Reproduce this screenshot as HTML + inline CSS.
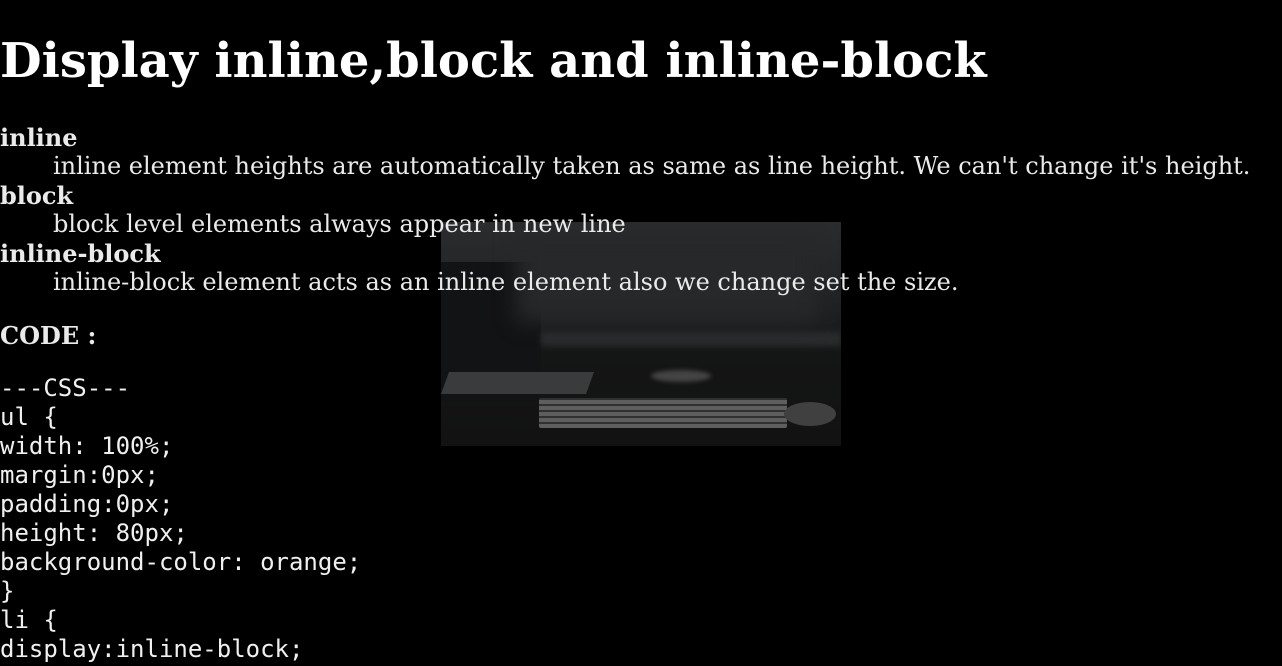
<!DOCTYPE html>
<html><head><meta charset="utf-8"><style>
html,body{margin:0;background:#000;width:1282px;height:666px;overflow:hidden}
body{position:relative;color:#eaeaea;font-family:"DejaVu Serif","Liberation Serif",serif}
.l{position:absolute;left:0;white-space:pre;line-height:29px;font-size:24px}
.b{font-weight:bold}
.d{left:53px}
.m{font-family:"DejaVu Sans Mono","Liberation Mono",monospace;font-size:24px;color:#f0f0f0}
h1{position:absolute;left:0;top:31px;margin:0;font-size:48px;line-height:60px;color:#fff;white-space:nowrap}
.img{position:absolute;left:441px;top:222px;width:400px;height:224px;overflow:hidden;
background:linear-gradient(180deg,#2a2c2e 0%,#202224 35%,#1a1b1c 50%,#141515 60%,#121212 100%)}
</style></head><body>
<div class="img">
<div style="position:absolute;left:0;top:40px;width:100px;height:140px;background:#121314"></div>
<div style="position:absolute;left:0;top:150px;width:145px;height:22px;background:#3a3b3c;transform:skewX(-20deg);transform-origin:bottom"></div>
<div style="position:absolute;left:100px;top:110px;width:300px;height:14px;background:#2a2b2c;filter:blur(3px)"></div>
<div style="position:absolute;left:75px;top:10px;width:300px;height:90px;background:#262829;filter:blur(10px)"></div>
<div style="position:absolute;left:210px;top:148px;width:60px;height:12px;border-radius:50%;background:#444;filter:blur(2px)"></div>
<div style="position:absolute;left:98px;top:176px;width:248px;height:30px;background:repeating-linear-gradient(0deg,#777 0 4px,#3a3a3a 4px 6px);border-radius:2px;opacity:.75"></div>
<div style="position:absolute;left:343px;top:180px;width:52px;height:24px;border-radius:50%;background:#404040"></div>
</div>
<h1>Display inline,block and inline-block</h1>
<div class="l b" style="top:123px">inline</div>
<div class="l d" style="top:152px">inline element heights are automatically taken as same as line height. We can't change it's height.</div>
<div class="l b" style="top:181px">block</div>
<div class="l d" style="top:210px">block level elements always appear in new line</div>
<div class="l b" style="top:239px">inline-block</div>
<div class="l d" style="top:268px">inline-block element acts as an inline element also we change set the size.</div>
<div class="l b" style="top:321px">CODE :</div>
<div class="l m" style="top:374px">---CSS---
ul {
width: 100%;
margin:0px;
padding:0px;
height: 80px;
background-color: orange;
}
li {
display:inline-block;</div>
</body></html>
